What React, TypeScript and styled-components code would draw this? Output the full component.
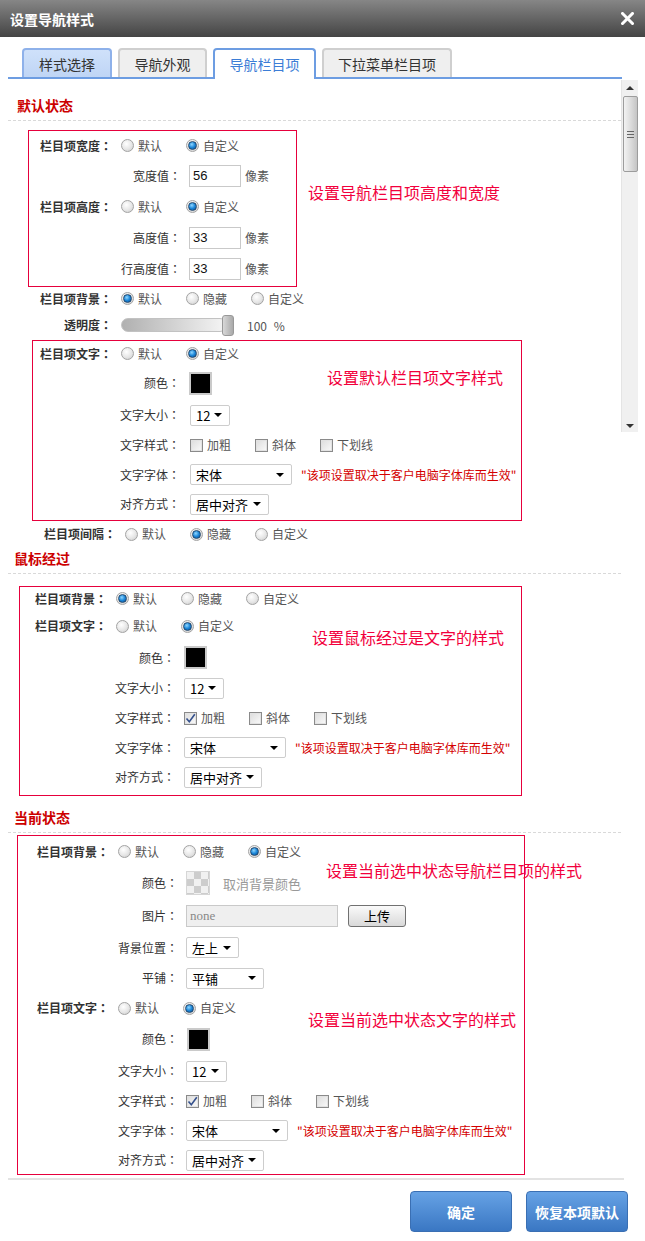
import React from "react";
import styled, { createGlobalStyle } from "styled-components";

const GlobalStyle = createGlobalStyle`
  html, body { margin: 0; padding: 0; background: #fff; }
  body {
    font-family: "Noto Sans CJK SC", "Noto Sans", sans-serif;
    font-size: 12px;
    color: #333;
  }
  * { box-sizing: border-box; }
`;

const Dialog = styled.div`
  position: relative;
  width: 645px;
  height: 1241px;
  overflow: hidden;
  background: #fff;
`;

const TitleBar = styled.div`
  height: 37px;
  display: flex;
  align-items: center;
  justify-content: space-between;
  padding: 0 11px 0 10px;
  background: linear-gradient(#868686, #444);
`;

const Title = styled.h1`
  margin: 0;
  font-size: 14px;
  line-height: 20px;
  font-weight: bold;
  color: #fff;
`;

const CloseIcon = styled.svg`
  width: 13px;
  height: 13px;
  display: block;
`;

const TabStrip = styled.div`
  display: flex;
  align-items: flex-end;
  gap: 6px;
  height: 42px;
  margin: 0 23px 0 8px;
  padding: 11px 0 0 14px;
  border-bottom: 2px solid #6d9de2;
`;

type TabKind = "picked" | "plain" | "active";

const Tab = styled.div<{ $w: number; $kind: TabKind }>`
  width: ${(p) => p.$w}px;
  height: ${(p) => (p.$kind === "active" ? 31 : 29)}px;
  margin-bottom: ${(p) => (p.$kind === "active" ? -2 : 0)}px;
  display: flex;
  align-items: center;
  justify-content: center;
  padding-bottom: ${(p) => (p.$kind === "active" ? 2 : 0)}px;
  font-size: 14px;
  border: 2px solid
    ${(p) => (p.$kind === "plain" ? "#cfcfcf" : p.$kind === "picked" ? "#8eb1ea" : "#6d9de2")};
  border-bottom: none;
  border-radius: 4px 4px 0 0;
  color: ${(p) => (p.$kind === "active" ? "#3c7dd6" : "#333")};
  background: ${(p) =>
    p.$kind === "active" ? "#fff" : p.$kind === "picked" ? "linear-gradient(#cfe1fa, #bfd5f5)" : "#efefef"};
`;

const Body = styled.div`
  width: 613px;
  padding-left: 8px;
  box-sizing: content-box;
`;

const SectionTitle = styled.div<{ $pt: number; $pl: number }>`
  padding: ${(p) => p.$pt}px 0 5px ${(p) => p.$pl}px;
  font-size: 14px;
  line-height: 20px;
  font-weight: bold;
  color: #cc0000;
  border-bottom: 1px dashed #d9d9d9;
`;

const Frame = styled.div<{ $ml: number; $mt: number; $w: number; $pl: number; $pb: number }>`
  position: relative;
  width: ${(p) => p.$w}px;
  margin: ${(p) => p.$mt}px 0 0 ${(p) => p.$ml}px;
  padding: 0 0 ${(p) => p.$pb}px ${(p) => p.$pl}px;
  border: 1px solid #e6003c;
`;

const Callout = styled.span<{ $x: number; $y: number }>`
  position: absolute;
  left: ${(p) => p.$x}px;
  top: ${(p) => p.$y}px;
  font-size: 16px;
  line-height: 20px;
  color: #f2003c;
  white-space: nowrap;
`;

const Row = styled.div<{ $h: number; $pl?: number }>`
  display: flex;
  align-items: center;
  height: ${(p) => p.$h}px;
  padding-left: ${(p) => p.$pl ?? 0}px;
  white-space: nowrap;
`;

const Label = styled.span<{ $w: number; $gap: number; $bold?: boolean }>`
  flex: none;
  width: ${(p) => p.$w}px;
  margin-right: ${(p) => p.$gap}px;
  text-align: right;
  line-height: 16px;
  font-weight: ${(p) => (p.$bold ? "bold" : "normal")};
  color: #333;
`;

const Colon = styled.span`
  display: inline-block;
  width: 12px;
  text-align: center;
  font-family: "Noto Sans CJK TC", "Noto Sans CJK SC", sans-serif;
`;

const Choice = styled.span<{ $w?: number }>`
  display: inline-flex;
  align-items: center;
  gap: 4px;
  flex: none;
  width: ${(p) => (p.$w ? `${p.$w}px` : "auto")};
  color: #555;
  line-height: 16px;
`;

const RadioDot = styled.span<{ $on: boolean }>`
  flex: none;
  width: 13px;
  height: 13px;
  border-radius: 50%;
  border: 1px solid #a3a3a3;
  background: radial-gradient(circle at 40% 35%, #fff 0%, #e6e6e6 55%, #c8c8c8 100%);
  display: flex;
  align-items: center;
  justify-content: center;
  &::after {
    content: "";
    display: ${(p) => (p.$on ? "block" : "none")};
    width: 7px;
    height: 7px;
    border-radius: 50%;
    border: 1px solid #22486e;
    background: radial-gradient(circle at 40% 35%, #8fd6ff 0%, #1b86d8 50%, #0b4a8c 100%);
  }
`;

const CheckBox = styled.span`
  flex: none;
  width: 13px;
  height: 13px;
  border: 1px solid #8a8a8a;
  box-shadow: inset 0 0 0 1px #e2e2e2;
  background: linear-gradient(135deg, #dcdcdc, #fafafa);
  display: flex;
  align-items: center;
  justify-content: center;
`;

const CheckMark = styled.svg`
  width: 11px;
  height: 11px;
  display: block;
`;

const Swatch = styled.span<{ $ml?: number }>`
  flex: none;
  width: 23px;
  height: 23px;
  margin-left: ${(p) => p.$ml ?? 0}px;
  border: 2px solid #cacaca;
  background: #000;
`;

const Checker = styled.span`
  flex: none;
  width: 24px;
  height: 24px;
  border: 1px solid #d6d6d6;
  background: repeating-conic-gradient(#cdcdcd 0% 25%, #f1f1f1 0% 50%) 0 0 / 14px 14px;
`;

const Muted = styled.span<{ $ml: number }>`
  margin-left: ${(p) => p.$ml}px;
  color: #999;
  font-size: 13px;
`;

const Unit = styled.span`
  margin-left: 4px;
  color: #555;
`;

const TextInput = styled.input<{ $w: number; $muted?: boolean }>`
  flex: none;
  width: ${(p) => p.$w}px;
  height: 22px;
  margin: 0;
  padding: 0 3px;
  border: 1px solid #c9c9c9;
  border-radius: 0;
  outline: none;
  font-family: ${(p) => (p.$muted ? '"Liberation Serif", serif' : '"Liberation Sans", sans-serif')};
  font-size: 13px;
  color: ${(p) => (p.$muted ? "#888" : "#111")};
  background: ${(p) => (p.$muted ? "#efefef" : "#fff")};
`;

const UploadButton = styled.button`
  flex: none;
  width: 58px;
  height: 22px;
  margin-left: 10px;
  padding: 0;
  border: 1px solid #717171;
  border-radius: 3px;
  background: linear-gradient(#fafafa, #d9d9d9);
  font-family: inherit;
  font-size: 13px;
  color: #000;
`;

const Dropdown = styled.div<{ $w: number }>`
  flex: none;
  width: ${(p) => p.$w}px;
  height: 21px;
  display: flex;
  align-items: center;
  justify-content: space-between;
  padding: 0 7px 0 5px;
  border: 1px solid #cdcdcd;
  border-radius: 2px;
  background: #fff;
  font-size: 13px;
  color: #000;
`;

const Arrow = styled.span`
  width: 0;
  height: 0;
  border-left: 4px solid transparent;
  border-right: 4px solid transparent;
  border-top: 4px solid #000;
`;

const Note = styled.span`
  margin-left: 9px;
  color: #d40000;
  font-size: 12px;
`;

const SliderBox = styled.div`
  position: relative;
  flex: none;
  width: 113px;
  height: 21px;
  display: flex;
  align-items: center;
`;

const Track = styled.div`
  width: 106px;
  height: 14px;
  border-radius: 7px;
  border: 1px solid #c2c2c2;
  background: linear-gradient(to right, #b0b0b0, #f5f5f5);
`;

const Thumb = styled.div`
  position: absolute;
  right: 0;
  top: 0;
  width: 12px;
  height: 21px;
  border-radius: 3px;
  border: 1px solid #999;
  background: linear-gradient(to right, #d8d8d8, #a9a9a9);
`;

const Percent = styled.span`
  margin-left: 13px;
  color: #555;
  word-spacing: 4px;
`;

const Scrollbar = styled.div`
  position: absolute;
  left: 621px;
  top: 80px;
  width: 17px;
  height: 352px;
  background: #f0f0f0;
  border-left: 1px solid #e4e4e4;
  display: flex;
  flex-direction: column;
  align-items: center;
`;

const ScrollArrow = styled.span<{ $down?: boolean }>`
  margin: ${(p) => (p.$down ? "auto 0 4px" : "6px 0 6px")};
  width: 0;
  height: 0;
  border-left: 4px solid transparent;
  border-right: 4px solid transparent;
  ${(p) => (p.$down ? "border-top: 4px solid #333;" : "border-bottom: 4px solid #333;")}
`;

const ScrollThumb = styled.div`
  width: 15px;
  height: 76px;
  border: 1px solid #9c9c9c;
  border-radius: 2px;
  background: linear-gradient(to right, #f2f2f2, #d8d8d8 60%, #c4c4c4);
  display: flex;
  flex-direction: column;
  align-items: center;
  justify-content: center;
  gap: 2px;
`;

const Grip = styled.span`
  width: 7px;
  height: 1px;
  background: #666;
`;

const Divider = styled.div`
  height: 2px;
  margin: 3px 21px 0 8px;
  background: #e3e3e3;
`;

const ButtonBar = styled.div`
  display: flex;
  justify-content: flex-end;
  gap: 14px;
  padding: 11px 17px 0 0;
`;

const BlueButton = styled.button`
  width: 102px;
  height: 41px;
  padding: 0;
  border: 1px solid #3a6fb3;
  border-radius: 4px;
  background: linear-gradient(#66a2e5, #3a77c3);
  color: #fff;
  font-family: inherit;
  font-size: 14px;
  font-weight: bold;
`;

/* ---------- helpers ---------- */

type Cols = { pl: number; main: number; mainGap: number; sub: number; subGap: number };

function Radios({ items, on }: { items: string[]; on: number }) {
  return (
    <>
      {items.map((t, i) => (
        <Choice key={t} $w={i < items.length - 1 ? 65 : undefined}>
          <RadioDot $on={i === on} />
          {t}
        </Choice>
      ))}
    </>
  );
}

function Checks({ bold }: { bold?: boolean }) {
  const items = ["加粗", "斜体", "下划线"];
  return (
    <>
      {items.map((t, i) => (
        <Choice key={t} $w={i < 2 ? 65 : undefined}>
          <CheckBox>
            {bold && i === 0 && (
              <CheckMark viewBox="0 0 11 11">
                <path d="M1.5 5.5 L4.3 8.8 L9.8 1.2" fill="none" stroke="#34508c" strokeWidth="1.6" />
              </CheckMark>
            )}
          </CheckBox>
          {t}
        </Choice>
      ))}
    </>
  );
}

function Select({ w, value }: { w: number; value: string }) {
  return (
    <Dropdown $w={w}>
      {value}
      <Arrow />
    </Dropdown>
  );
}

function FieldLabel({ w, gap, bold, text }: { w: number; gap: number; bold?: boolean; text: string }) {
  return (
    <Label $w={w} $gap={gap} $bold={bold}>
      {text}
      <Colon>：</Colon>
    </Label>
  );
}

function Main({ c, h, label, children }: { c: Cols; h: number; label: string; children?: React.ReactNode }) {
  return (
    <Row $h={h}>
      <FieldLabel w={c.main} gap={c.mainGap} bold text={label} />
      {children}
    </Row>
  );
}

function Sub({ c, h, label, children }: { c: Cols; h: number; label: string; children?: React.ReactNode }) {
  return (
    <Row $h={h}>
      <FieldLabel w={c.sub} gap={c.subGap} text={label} />
      {children}
    </Row>
  );
}

const NOTE = "\"该项设置取决于客户电脑字体库而生效\"";
const YN = ["默认", "自定义"];
const YHN = ["默认", "隐藏", "自定义"];

const C1: Cols = { pl: 11, main: 72, mainGap: 9, sub: 141, subGap: 8 };
const C2: Cols = { pl: 7, main: 72, mainGap: 9, sub: 140, subGap: 10 };
const C3: Cols = { pl: 15, main: 72, mainGap: 9, sub: 140, subGap: 9 };
const C4: Cols = { pl: 19, main: 72, mainGap: 9, sub: 141, subGap: 8 };

export default function App() {
  return (
    <Dialog>
      <GlobalStyle />
      <TitleBar>
        <Title>设置导航样式</Title>
        <CloseIcon viewBox="0 0 13 13">
          <path d="M1.5 1.5 L11.5 11.5 M11.5 1.5 L1.5 11.5" stroke="#fff" strokeWidth="3" strokeLinecap="square" />
        </CloseIcon>
      </TitleBar>

      <TabStrip>
        <Tab $w={90} $kind="picked">样式选择</Tab>
        <Tab $w={89} $kind="plain">导航外观</Tab>
        <Tab $w={103} $kind="active">导航栏目项</Tab>
        <Tab $w={130} $kind="plain">下拉菜单栏目项</Tab>
      </TabStrip>

      <Body>
        <SectionTitle $pt={16} $pl={9}>默认状态</SectionTitle>

        <Frame $ml={20} $mt={9} $w={269} $pl={C1.pl} $pb={2}>
          <Main c={C1} h={29} label="栏目项宽度">
            <Radios items={YN} on={1} />
          </Main>
          <Sub c={C1} h={31} label="宽度值">
            <TextInput $w={52} defaultValue="56" />
            <Unit>像素</Unit>
          </Sub>
          <Main c={C1} h={31} label="栏目项高度">
            <Radios items={YN} on={1} />
          </Main>
          <Sub c={C1} h={31} label="高度值">
            <TextInput $w={52} defaultValue="33" />
            <Unit>像素</Unit>
          </Sub>
          <Sub c={C1} h={31} label="行高度值">
            <TextInput $w={52} defaultValue="33" />
            <Unit>像素</Unit>
          </Sub>
          <Callout $x={279} $y={51}>设置导航栏目项高度和宽度</Callout>
        </Frame>

        <Row $h={23} $pl={32}>
          <FieldLabel w={72} gap={9} bold text="栏目项背景" />
          <Radios items={YHN} on={0} />
        </Row>
        <Row $h={30} $pl={32}>
          <FieldLabel w={72} gap={9} bold text="透明度" />
          <SliderBox>
            <Track />
            <Thumb />
          </SliderBox>
          <Percent>100 %</Percent>
        </Row>

        <Frame $ml={24} $mt={0} $w={490} $pl={C2.pl} $pb={1}>
          <Main c={C2} h={25} label="栏目项文字">
            <Radios items={YN} on={1} />
          </Main>
          <Sub c={C2} h={34} label="颜色">
            <Swatch $ml={-1} />
          </Sub>
          <Sub c={C2} h={30} label="文字大小">
            <Select w={40} value="12" />
          </Sub>
          <Sub c={C2} h={30} label="文字样式">
            <Checks />
          </Sub>
          <Sub c={C2} h={29} label="文字字体">
            <Select w={102} value="宋体" />
            <Note>{NOTE}</Note>
          </Sub>
          <Sub c={C2} h={30} label="对齐方式">
            <Select w={79} value="居中对齐" />
          </Sub>
          <Callout $x={294} $y={26}>设置默认栏目项文字样式</Callout>
        </Frame>

        <Row $h={26} $pl={36}>
          <FieldLabel w={72} gap={9} bold text="栏目项间隔" />
          <Radios items={YHN} on={1} />
        </Row>

        <SectionTitle $pt={1} $pl={6}>鼠标经过</SectionTitle>

        <Frame $ml={11} $mt={12} $w={503} $pl={C3.pl} $pb={3}>
          <Main c={C3} h={23} label="栏目项背景">
            <Radios items={YHN} on={0} />
          </Main>
          <Main c={C3} h={32} label="栏目项文字">
            <Radios items={YN} on={1} />
          </Main>
          <Sub c={C3} h={31} label="颜色">
            <Swatch />
          </Sub>
          <Sub c={C3} h={30} label="文字大小">
            <Select w={40} value="12" />
          </Sub>
          <Sub c={C3} h={30} label="文字样式">
            <Checks bold />
          </Sub>
          <Sub c={C3} h={29} label="文字字体">
            <Select w={102} value="宋体" />
            <Note>{NOTE}</Note>
          </Sub>
          <Sub c={C3} h={30} label="对齐方式">
            <Select w={78} value="居中对齐" />
          </Sub>
          <Callout $x={292} $y={40}>设置鼠标经过是文字的样式</Callout>
        </Frame>

        <SectionTitle $pt={11} $pl={6}>当前状态</SectionTitle>

        <Frame $ml={9} $mt={2} $w={508} $pl={C4.pl} $pb={0}>
          <Main c={C4} h={31} label="栏目项背景">
            <Radios items={YHN} on={2} />
          </Main>
          <Sub c={C4} h={32} label="颜色">
            <Checker />
            <Muted $ml={13}>取消背景颜色</Muted>
          </Sub>
          <Sub c={C4} h={33} label="图片">
            <TextInput $w={152} $muted readOnly value="none" />
            <UploadButton>上传</UploadButton>
          </Sub>
          <Sub c={C4} h={31} label="背景位置">
            <Select w={53} value="左上" />
          </Sub>
          <Sub c={C4} h={30} label="平铺">
            <Select w={78} value="平铺" />
          </Sub>
          <Main c={C4} h={30} label="栏目项文字">
            <Radios items={YN} on={1} />
          </Main>
          <Sub c={C4} h={32} label="颜色">
            <Swatch $ml={1} />
          </Sub>
          <Sub c={C4} h={32} label="文字大小">
            <Select w={41} value="12" />
          </Sub>
          <Sub c={C4} h={28} label="文字样式">
            <Checks bold />
          </Sub>
          <Sub c={C4} h={31} label="文字字体">
            <Select w={102} value="宋体" />
            <Note>{NOTE}</Note>
          </Sub>
          <Sub c={C4} h={28} label="对齐方式">
            <Select w={78} value="居中对齐" />
          </Sub>
          <Callout $x={308} $y={24}>设置当前选中状态导航栏目项的样式</Callout>
          <Callout $x={290} $y={173}>设置当前选中状态文字的样式</Callout>
        </Frame>
      </Body>

      <Divider />
      <ButtonBar>
        <BlueButton>确定</BlueButton>
        <BlueButton>恢复本项默认</BlueButton>
      </ButtonBar>

      <Scrollbar>
        <ScrollArrow />
        <ScrollThumb>
          <Grip />
          <Grip />
          <Grip />
        </ScrollThumb>
        <ScrollArrow $down />
      </Scrollbar>
    </Dialog>
  );
}
